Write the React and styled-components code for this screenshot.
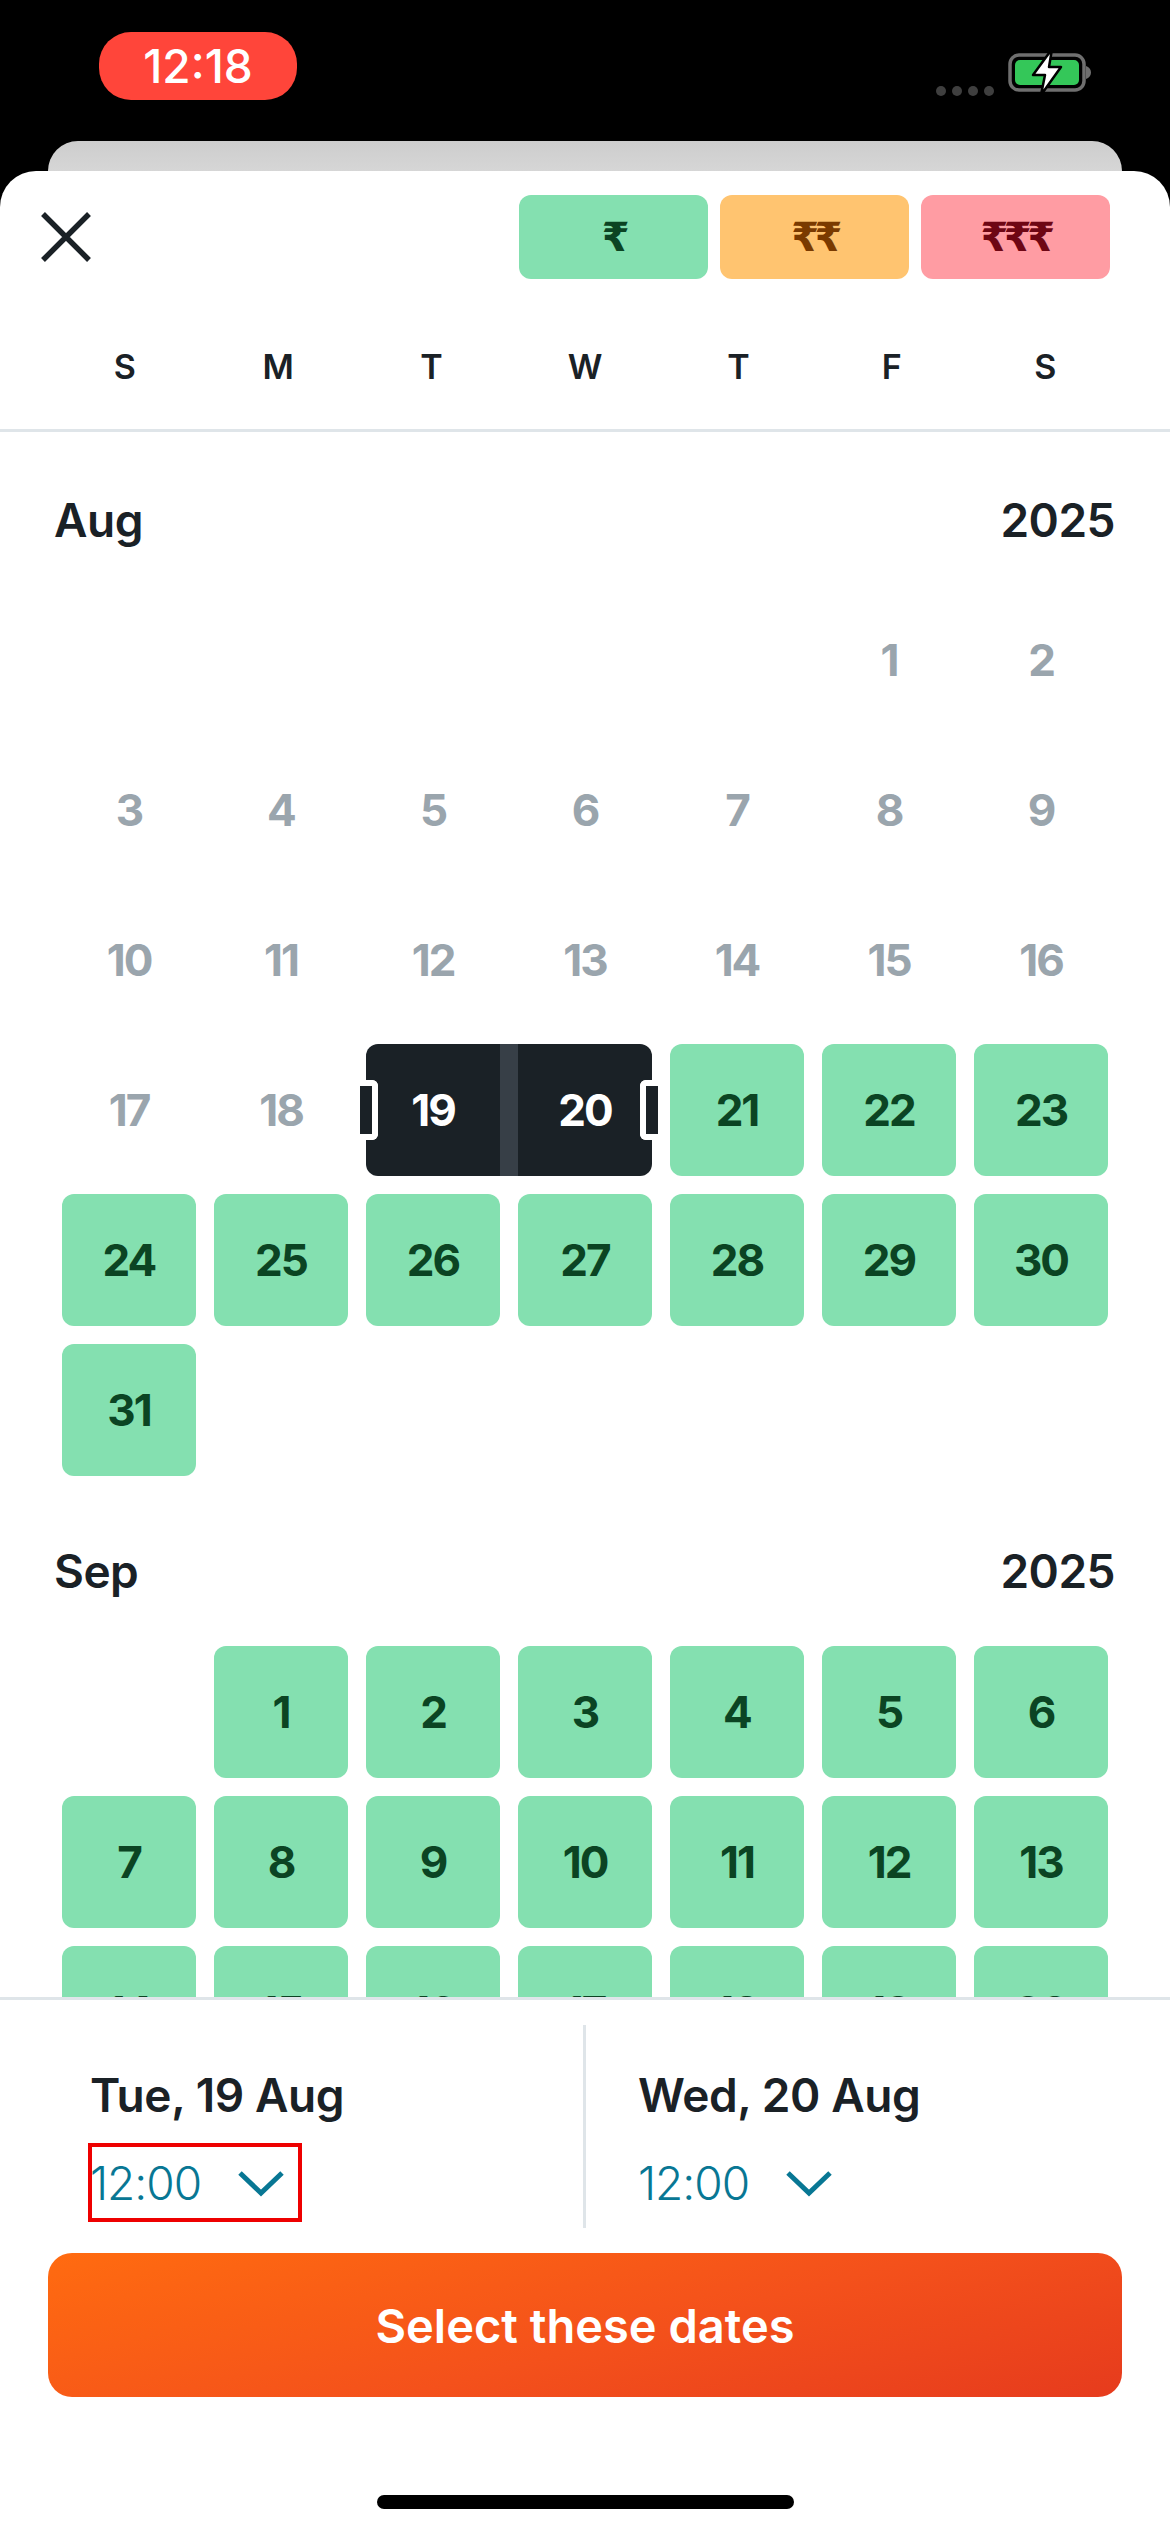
import React from "react";
import styled, { createGlobalStyle } from "styled-components";

const GlobalStyle = createGlobalStyle`
  html, body {
    margin: 0;
    padding: 0;
    background: #000;
  }
  * {
    box-sizing: border-box;
  }
`;

const Screen = styled.div`
  width: 1170px;
  height: 2532px;
  display: flex;
  flex-direction: column;
  overflow: hidden;
  background: #000;
  font-family: Inter, "Noto Sans", sans-serif;
  color: #1a2126;
`;

const StatusBar = styled.div`
  height: 141px;
  flex: none;
  display: flex;
  justify-content: space-between;
  padding: 32px 78px 0 99px;
`;

const TimePill = styled.div`
  width: 198px;
  height: 68px;
  border-radius: 32px;
  background: #ff453a;
  color: #fff;
  display: flex;
  align-items: center;
  justify-content: center;
  font-size: 46px;
  font-weight: 500;
`;

const StatusIcons = styled.div`
  display: flex;
  align-items: flex-start;
  gap: 14px;
  padding-top: 15px;
`;

const Dots = styled.div`
  display: flex;
  gap: 6px;
  margin-top: 39px;
`;

const Dot = styled.span`
  width: 10px;
  height: 10px;
  border-radius: 50%;
  background: #3f3f3f;
`;

const PeekCard = styled.div`
  height: 30px;
  flex: none;
  margin: 0 48px;
  border-radius: 30px 30px 0 0;
  background: linear-gradient(#cdcdcd, #d6d6d6);
`;

const Sheet = styled.div`
  flex: 1;
  min-height: 0;
  display: flex;
  flex-direction: column;
  background: #fff;
  border-radius: 36px 36px 0 0;
`;

const Header = styled.div`
  flex: none;
  height: 261px;
  padding-top: 24px;
  border-bottom: 3px solid #dfe5e9;
`;

const TopRow = styled.div`
  display: flex;
  align-items: center;
  justify-content: space-between;
  padding: 0 60px 0 41px;
`;

const CloseIcon = styled.svg`
  width: 50px;
  height: 50px;
  display: block;
`;

const PriceTabs = styled.div`
  display: flex;
  gap: 12px;
`;

const PriceTab = styled.div`
  width: 189px;
  height: 84px;
  border-radius: 12px;
  display: flex;
  align-items: center;
  justify-content: center;
  background: ${(p) => p.$bg};
  color: ${(p) => p.$fg};
  font-family: "DejaVu Sans", sans-serif;
  font-size: 40px;
  font-weight: 700;
  letter-spacing: -4.5px;
`;

const WeekRow = styled.div`
  display: grid;
  grid-template-columns: repeat(7, 1fr);
  padding: 0 48px;
  margin-top: 68px;
`;

const WeekDay = styled.div`
  height: 40px;
  line-height: 40px;
  text-align: center;
  font-size: 34px;
  font-weight: 600;
`;

const ScrollArea = styled.div`
  flex: 1;
  min-height: 0;
  overflow: hidden;
`;

const MonthTitle = styled.div`
  height: 60px;
  margin: ${(p) => p.$top}px 0 ${(p) => p.$bottom}px;
  padding: 0 55px 0 54px;
  display: flex;
  align-items: center;
  justify-content: space-between;
  font-size: 46px;
  font-weight: 600;
  letter-spacing: -0.5px;
`;

const DayGrid = styled.div`
  display: grid;
  grid-template-columns: repeat(7, 134px);
  grid-auto-rows: 132px;
  gap: 18px;
  padding-left: 62px;
`;

const Day = styled.div`
  position: relative;
  display: flex;
  align-items: center;
  justify-content: center;
  font-size: 44px;
  font-weight: 700;
  letter-spacing: -2px;
  border-radius: 12px;
  ${(p) => p.$kind === "past" && "color: #9aa5ad;"}
  ${(p) => p.$kind === "free" && "background: #84e0b0; color: #0b4423;"}
  ${(p) => p.$kind === "start" && `
    background: #1a2126;
    color: #fff;
    border-radius: 12px 0 0 12px;
    box-shadow: 18px 0 0 #373f47;
  `}
  ${(p) => p.$kind === "end" && `
    background: #1a2126;
    color: #fff;
    border-radius: 0 12px 12px 0;
  `}
`;

const Handle = styled.span`
  position: absolute;
  top: 36px;
  width: 18px;
  height: 60px;
  background: #1a2126;
  border: 6px solid #fff;
  ${(p) =>
    p.$side === "left"
      ? "left: -6px; border-left: 0; border-radius: 0 6px 6px 0;"
      : "right: -6px; border-right: 0; border-radius: 6px 0 0 6px;"}
`;

const Footer = styled.div`
  flex: none;
  height: 535px;
  border-top: 3px solid #dfe5e9;
  padding-top: 25px;
`;

const DateRow = styled.div`
  display: flex;
  height: 203px;
`;

const DateCol = styled.div`
  width: ${(p) => p.$width}px;
  padding-left: ${(p) => p.$pad}px;
  padding-top: 43px;
  ${(p) => p.$divider && "border-right: 3px solid #dfe5e9;"}
`;

const DateLabel = styled.div`
  height: 54px;
  line-height: 54px;
  font-size: 46px;
  font-weight: 600;
  letter-spacing: -0.4px;
`;

const TimeSelect = styled.div`
  width: 214px;
  height: 79px;
  margin: 21px 0 0 -2px;
  padding-right: 13px;
  display: flex;
  align-items: center;
  justify-content: space-between;
  border: 4px solid ${(p) => (p.$marked ? "#ee0000" : "transparent")};
  color: #087794;
  font-size: 46px;
  font-weight: 300;
  letter-spacing: -1px;
`;

const TimeText = styled.span`
  margin-left: -2px;
`;

const Chevron = styled.svg`
  width: 48px;
  height: 28px;
  display: block;
`;

const SelectButton = styled.div`
  height: 144px;
  margin: 25px 48px 0;
  border-radius: 24px;
  display: flex;
  align-items: center;
  justify-content: center;
  background: linear-gradient(165deg, #ff6b10 0%, #f4511b 55%, #e63b1d 100%);
  color: #fff;
  font-size: 47px;
  font-weight: 600;
`;

const HomeBar = styled.div`
  width: 417px;
  height: 14px;
  margin: 98px auto 0;
  border-radius: 7px;
  background: #000;
`;

const WEEK = ["S", "M", "T", "W", "T", "F", "S"];

const PRICES = [
  { label: "₹", bg: "#84e0b0", fg: "#0b4423" },
  { label: "₹₹", bg: "#ffc470", fg: "#7a3a00" },
  { label: "₹₹₹", bg: "#ff9ca3", fg: "#6e0614" },
];

const kindFor = (month, day) => {
  if (month === "Sep") return "free";
  if (day === 19) return "start";
  if (day === 20) return "end";
  return day < 19 ? "past" : "free";
};

const MONTHS = [
  { name: "Aug", offset: 5, days: 31, top: 58, bottom: 44 },
  { name: "Sep", offset: 1, days: 30, top: 65, bottom: 45 },
];

const Battery = () => (
  <svg width="84" height="50" viewBox="0 0 84 50">
    <rect x="2" y="8" width="74" height="35" rx="9" fill="none" stroke="#6f6f6f" strokeWidth="3.5" />
    <rect x="7" y="13" width="64" height="25" rx="5" fill="#34c759" />
    <path d="M78 19c3 1 5 3.5 5 6.5S81 31 78 32z" fill="#6f6f6f" />
    <path d="M44 2L25 28h12l-4 20 20-28H41z" fill="#fff" stroke="#000" strokeWidth="2.5" strokeLinejoin="round" />
  </svg>
);

const ChevronDown = () => (
  <Chevron viewBox="0 0 48 28">
    <path d="M3 4l21 20L45 4" fill="none" stroke="#087794" strokeWidth="5" />
  </Chevron>
);

const App = () => {
  return (
    <Screen>
      <GlobalStyle />
      <StatusBar>
        <TimePill>12:18</TimePill>
        <StatusIcons>
          <Dots>
            <Dot />
            <Dot />
            <Dot />
            <Dot />
          </Dots>
          <Battery />
        </StatusIcons>
      </StatusBar>
      <PeekCard />
      <Sheet>
        <Header>
          <TopRow>
            <CloseIcon viewBox="0 0 50 50">
              <path d="M2 2l46 46M48 2L2 48" fill="none" stroke="#1a2126" strokeWidth="5.5" />
            </CloseIcon>
            <PriceTabs>
              {PRICES.map((price) => (
                <PriceTab key={price.label} $bg={price.bg} $fg={price.fg}>
                  {price.label}
                </PriceTab>
              ))}
            </PriceTabs>
          </TopRow>
          <WeekRow>
            {WEEK.map((day, index) => (
              <WeekDay key={index}>{day}</WeekDay>
            ))}
          </WeekRow>
        </Header>
        <ScrollArea>
          {MONTHS.map((month) => (
            <div key={month.name}>
              <MonthTitle $top={month.top} $bottom={month.bottom}>
                <span>{month.name}</span>
                <span>2025</span>
              </MonthTitle>
              <DayGrid>
                {Array.from({ length: month.offset }, (_, i) => (
                  <div key={`blank-${i}`} />
                ))}
                {Array.from({ length: month.days }, (_, i) => {
                  const day = i + 1;
                  const kind = kindFor(month.name, day);
                  return (
                    <Day key={day} $kind={kind}>
                      {day}
                      {kind === "start" && <Handle $side="left" />}
                      {kind === "end" && <Handle $side="right" />}
                    </Day>
                  );
                })}
              </DayGrid>
            </div>
          ))}
        </ScrollArea>
        <Footer>
          <DateRow>
            <DateCol $width={586} $pad={90} $divider>
              <DateLabel>Tue, 19 Aug</DateLabel>
              <TimeSelect $marked>
                <TimeText>12:00</TimeText>
                <ChevronDown />
              </TimeSelect>
            </DateCol>
            <DateCol $width={584} $pad={52}>
              <DateLabel>Wed, 20 Aug</DateLabel>
              <TimeSelect>
                <TimeText>12:00</TimeText>
                <ChevronDown />
              </TimeSelect>
            </DateCol>
          </DateRow>
          <SelectButton>Select these dates</SelectButton>
          <HomeBar />
        </Footer>
      </Sheet>
    </Screen>
  );
};

export default App;
